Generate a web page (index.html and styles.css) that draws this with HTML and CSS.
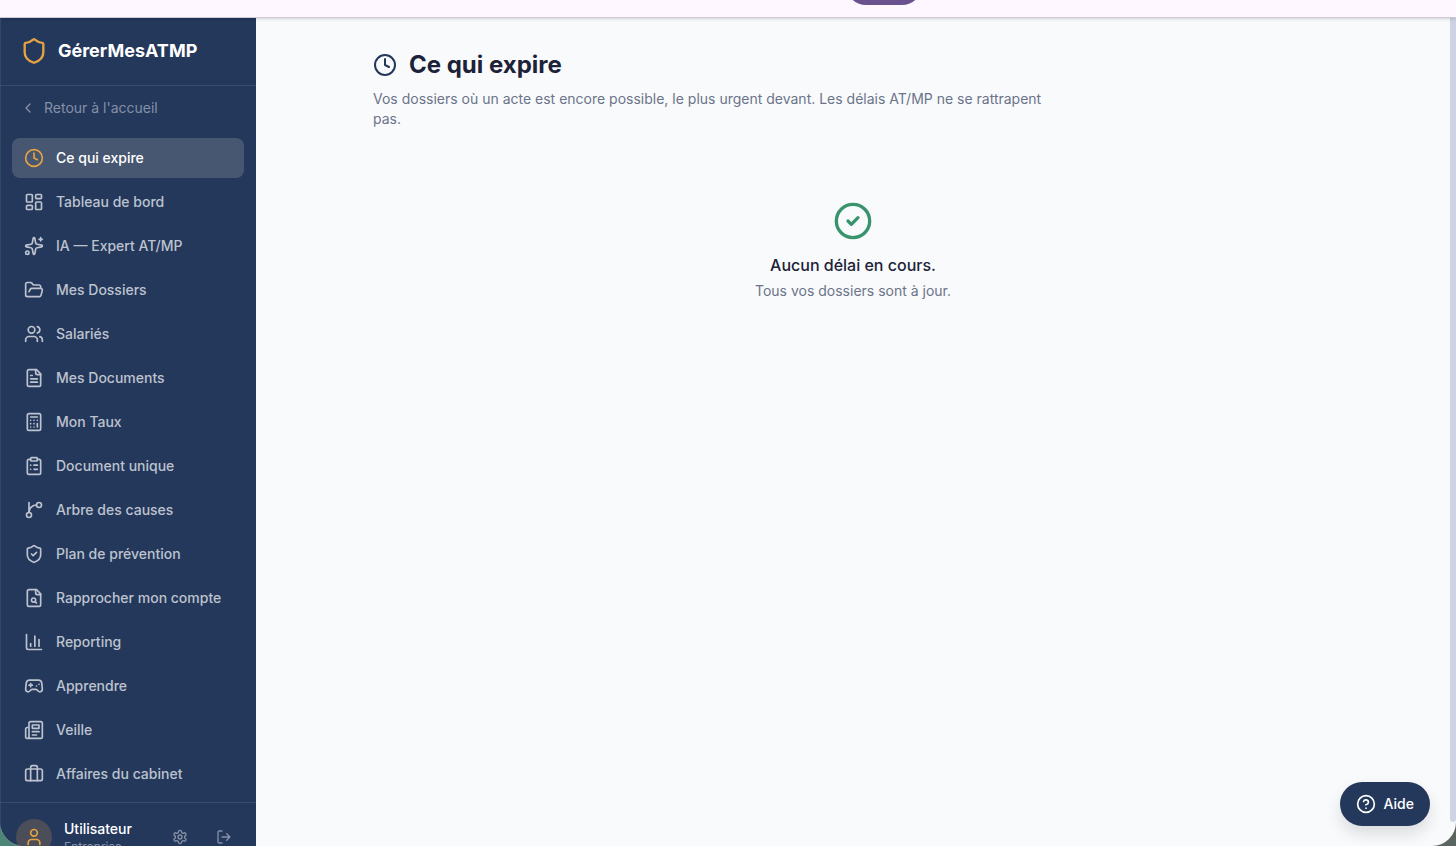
FILE: index.html
```
<!DOCTYPE html>
<html lang="fr">
<head>
    <meta charset="UTF-8">
    <meta name="viewport" content="width=device-width, initial-scale=1">
    <title>Ce qui expire - GérerMesATMP</title>
    <link rel="stylesheet" href="styles.css">
</head>
<body>
<div class="topbar"><span class="pill"></span></div>
<div class="app">
    <!-- menu -->
    <aside class="sidebar">
        <div class="brand">
            <svg class="icon gold" width="28" height="28" viewBox="0 0 24 24"><path d="M20 13c0 5-3.500 7.500-7.660 8.950a1 1 0 0 1-.67-.01C7.500 20.500 4 18 4 13V6a1 1 0 0 1 1-1c2 0 4.500-1.200 6.240-2.720a1.170 1.170 0 0 1 1.520 0C14.510 3.810 17 5 19 5a1 1 0 0 1 1 1z"/></svg>
            <span>GérerMesATMP</span>
        </div>
        <a class="back" href="#">
            <svg class="icon" width="16" height="16" viewBox="0 0 24 24"><path d="m15 18-6-6 6-6"/></svg>
            Retour à l'accueil
        </a>
        <nav class="menu">
            <a class="item current" href="#">
                <svg class="icon gold" width="20" height="20" viewBox="0 0 24 24"><circle cx="12" cy="12" r="10"/><path d="M12 6v6l4 2"/></svg>
                Ce qui expire
            </a>
            <a class="item" href="#">
                <svg class="icon" width="20" height="20" viewBox="0 0 24 24"><rect width="7" height="9" x="3" y="3" rx="1"/><rect width="7" height="5" x="14" y="3" rx="1"/><rect width="7" height="9" x="14" y="12" rx="1"/><rect width="7" height="5" x="3" y="16" rx="1"/></svg>
                Tableau de bord
            </a>
            <a class="item" href="#">
                <svg class="icon" width="20" height="20" viewBox="0 0 24 24"><path d="M11.017 2.814a1 1 0 0 1 1.966 0l1.051 5.558a2 2 0 0 0 1.594 1.594l5.558 1.051a1 1 0 0 1 0 1.966l-5.558 1.051a2 2 0 0 0-1.594 1.594l-1.051 5.558a1 1 0 0 1-1.966 0l-1.051-5.558a2 2 0 0 0-1.594-1.594l-5.558-1.051a1 1 0 0 1 0-1.966l5.558-1.051a2 2 0 0 0 1.594-1.594z"/><path d="M20 2v4M22 4h-4"/><circle cx="4" cy="20" r="2"/></svg>
                IA — Expert AT/MP
            </a>
            <a class="item" href="#">
                <svg class="icon" width="20" height="20" viewBox="0 0 24 24"><path d="m6 14 1.500-2.900A2 2 0 0 1 9.240 10H20a2 2 0 0 1 1.940 2.500l-1.540 6a2 2 0 0 1-1.950 1.500H4a2 2 0 0 1-2-2V5a2 2 0 0 1 2-2h3.900a2 2 0 0 1 1.690.9l.81 1.200a2 2 0 0 0 1.670.9H18a2 2 0 0 1 2 2v2"/></svg>
                Mes Dossiers
            </a>
            <a class="item" href="#">
                <svg class="icon" width="20" height="20" viewBox="0 0 24 24"><path d="M16 21v-2a4 4 0 0 0-4-4H6a4 4 0 0 0-4 4v2"/><circle cx="9" cy="7" r="4"/><path d="M22 21v-2a4 4 0 0 0-3-3.870M16 3.130a4 4 0 0 1 0 7.750"/></svg>
                Salariés
            </a>
            <a class="item" href="#">
                <svg class="icon" width="20" height="20" viewBox="0 0 24 24"><path d="M15 2H6a2 2 0 0 0-2 2v16a2 2 0 0 0 2 2h12a2 2 0 0 0 2-2V7Z"/><path d="M14 2v4a2 2 0 0 0 2 2h4M10 9H8M16 13H8M16 17H8"/></svg>
                Mes Documents
            </a>
            <a class="item" href="#">
                <svg class="icon" width="20" height="20" viewBox="0 0 24 24"><rect width="16" height="20" x="4" y="2" rx="2"/><path d="M8 6h8M16 14v4M16 10h.01M12 10h.01M8 10h.01M12 14h.01M8 14h.01M12 18h.01M8 18h.01"/></svg>
                Mon Taux
            </a>
            <a class="item" href="#">
                <svg class="icon" width="20" height="20" viewBox="0 0 24 24"><rect width="8" height="4" x="8" y="2" rx="1"/><path d="M16 4h2a2 2 0 0 1 2 2v14a2 2 0 0 1-2 2H6a2 2 0 0 1-2-2V6a2 2 0 0 1 2-2h2M12 11h4M12 16h4M8 11h.01M8 16h.01"/></svg>
                Document unique
            </a>
            <a class="item" href="#">
                <svg class="icon" width="20" height="20" viewBox="0 0 24 24"><path d="M6 3v12"/><circle cx="18" cy="6" r="3"/><circle cx="6" cy="18" r="3"/><path d="M15 6a9 9 0 0 0-9 9"/></svg>
                Arbre des causes
            </a>
            <a class="item" href="#">
                <svg class="icon" width="20" height="20" viewBox="0 0 24 24"><path d="M20 13c0 5-3.500 7.500-7.660 8.950a1 1 0 0 1-.67-.01C7.500 20.500 4 18 4 13V6a1 1 0 0 1 1-1c2 0 4.500-1.200 6.240-2.720a1.170 1.170 0 0 1 1.520 0C14.510 3.810 17 5 19 5a1 1 0 0 1 1 1z"/><path d="m9 12 2 2 4-4"/></svg>
                Plan de prévention
            </a>
            <a class="item" href="#">
                <svg class="icon" width="20" height="20" viewBox="0 0 24 24"><path d="M15 2H6a2 2 0 0 0-2 2v16a2 2 0 0 0 2 2h12a2 2 0 0 0 2-2V7Z"/><path d="M14 2v4a2 2 0 0 0 2 2h4"/><circle cx="11.500" cy="14.500" r="2.500"/><path d="M13.300 16.300 15 18"/></svg>
                Rapprocher mon compte
            </a>
            <a class="item" href="#">
                <svg class="icon" width="20" height="20" viewBox="0 0 24 24"><path d="M3 3v16a2 2 0 0 0 2 2h16M18 17V9M13 17V5M8 17v-3"/></svg>
                Reporting
            </a>
            <a class="item" href="#">
                <svg class="icon" width="20" height="20" viewBox="0 0 24 24"><path d="M6 11h4M8 9v4M15 12h.01M18 10h.01"/><path d="M17.320 5H6.680a4 4 0 0 0-3.978 3.590C2.604 9.416 2 14.456 2 16a3 3 0 0 0 3 3c1 0 1.500-.5 2-1l1.414-1.414A2 2 0 0 1 9.828 16h4.344a2 2 0 0 1 1.414.586L17 18c.5.5 1 1 2 1a3 3 0 0 0 3-3c0-1.545-.604-6.584-.702-7.410A4 4 0 0 0 17.320 5z"/></svg>
                Apprendre
            </a>
            <a class="item" href="#">
                <svg class="icon" width="20" height="20" viewBox="0 0 24 24"><path d="M4 22h16a2 2 0 0 0 2-2V4a2 2 0 0 0-2-2H8a2 2 0 0 0-2 2v16a2 2 0 0 1-2 2Zm0 0a2 2 0 0 1-2-2v-9c0-1.100.9-2 2-2h2M18 14h-8M15 18h-5M10 6h8v4h-8V6Z"/></svg>
                Veille
            </a>
            <a class="item" href="#">
                <svg class="icon" width="20" height="20" viewBox="0 0 24 24"><path d="M16 20V4a2 2 0 0 0-2-2h-4a2 2 0 0 0-2 2v16"/><rect width="20" height="14" x="2" y="6" rx="2"/></svg>
                Affaires du cabinet
            </a>
        </nav>
        <!-- compte -->
        <div class="user">
            <span class="avatar">
                <svg class="icon gold" width="20" height="20" viewBox="0 0 24 24"><path d="M19 21v-2a4 4 0 0 0-4-4H9a4 4 0 0 0-4 4v2"/><circle cx="12" cy="7" r="4"/></svg>
            </span>
            <div class="who">
                <p class="name">Utilisateur</p>
                <p class="role">Entreprise</p>
            </div>
            <button class="tool" type="button" aria-label="Paramètres">
                <svg class="icon" width="16" height="16" viewBox="0 0 24 24"><path d="M12.220 2h-.44a2 2 0 0 0-2 2v.18a2 2 0 0 1-1 1.730l-.43.25a2 2 0 0 1-2 0l-.15-.08a2 2 0 0 0-2.730.73l-.22.38a2 2 0 0 0 .73 2.730l.15.1a2 2 0 0 1 1 1.720v.51a2 2 0 0 1-1 1.740l-.15.09a2 2 0 0 0-.73 2.730l.22.38a2 2 0 0 0 2.730.73l.15-.08a2 2 0 0 1 2 0l.43.25a2 2 0 0 1 1 1.730V20a2 2 0 0 0 2 2h.44a2 2 0 0 0 2-2v-.18a2 2 0 0 1 1-1.730l.43-.25a2 2 0 0 1 2 0l.15.08a2 2 0 0 0 2.730-.73l.22-.39a2 2 0 0 0-.73-2.730l-.15-.08a2 2 0 0 1-1-1.740v-.5a2 2 0 0 1 1-1.740l.15-.09a2 2 0 0 0 .73-2.730l-.22-.38a2 2 0 0 0-2.730-.73l-.15.08a2 2 0 0 1-2 0l-.43-.25a2 2 0 0 1-1-1.730V4a2 2 0 0 0-2-2z"/><circle cx="12" cy="12" r="3"/></svg>
            </button>
            <button class="tool" type="button" aria-label="Se déconnecter">
                <svg class="icon" width="16" height="16" viewBox="0 0 24 24"><path d="m16 17 5-5-5-5M21 12H9M9 21H5a2 2 0 0 1-2-2V5a2 2 0 0 1 2-2h4"/></svg>
            </button>
        </div>
    </aside>
    <main class="main">
        <div class="content">
            <h1 class="title">
                <svg class="icon navy" width="24" height="24" viewBox="0 0 24 24"><circle cx="12" cy="12" r="10"/><path d="M12 6v6l4 2"/></svg>
                Ce qui expire
            </h1>
            <p class="intro">Vos dossiers où un acte est encore possible, le plus urgent devant. Les délais AT/MP ne se rattrapent pas.</p>
            <div class="empty">
                <svg class="icon green" width="40" height="40" viewBox="0 0 24 24"><circle cx="12" cy="12" r="10"/><path d="m9 12 2 2 4-4"/></svg>
                <p class="empty-title">Aucun délai en cours.</p>
                <p class="empty-text">Tous vos dossiers sont à jour.</p>
            </div>
        </div>
    </main>
    <div class="scroll"><div class="thumb"></div></div>
    <button class="help" type="button">
        <svg class="icon" width="20" height="20" viewBox="0 0 24 24"><circle cx="12" cy="12" r="10"/><path d="M9.090 9a3 3 0 0 1 5.830 1c0 2-3 3-3 3M12 17h.01"/></svg>
        Aide
    </button>
</div>
</body>
</html>
```
FILE: styles.css
```
* {
    box-sizing: border-box;
    margin: 0;
    padding: 0;
}
body {
    display: flex;
    flex-direction: column;
    height: 100vh;
    overflow: hidden;
    background: linear-gradient(to right, #4d8577, #5b655f);
    font: 14px/20px Inter, "Liberation Sans", sans-serif;
    color: #1c2237;
}
a {
    color: inherit;
    text-decoration: none;
}
button {
    border: 0;
    background: none;
    font: inherit;
    cursor: pointer;
}
.icon {
    flex: none;
    fill: none;
    stroke: currentColor;
    stroke-width: 2;
    stroke-linecap: round;
    stroke-linejoin: round;
}
.gold {
    color: #e5a243;
}
.navy {
    color: #24385c;
}
.green {
    color: #38946c;
}

/* bandeau du haut */
.topbar {
    position: relative;
    z-index: 1;
    display: flex;
    flex: none;
    justify-content: flex-end;
    align-items: flex-end;
    height: 17px;
    padding: 0 534px 12px 0;
    background: #fef7ff;
    box-shadow: 0 1px #cfcad3, 0 1px 4px rgba(0, 0, 0, .25);
}
.pill {
    width: 76px;
    height: 40px;
    border-radius: 20px;
    background: #6a528f;
}

.app {
    position: relative;
    display: flex;
    flex: 1;
    min-height: 0;
    overflow: hidden;
    border-radius: 0 0 24px 24px;
    background: #f9fafc;
}

/* menu */
.sidebar {
    display: flex;
    flex: none;
    flex-direction: column;
    width: 256px;
    background: #24385c;
    color: #bdc3ce;
    box-shadow: inset 1px 0 #35486a;
}
.brand {
    display: flex;
    flex: none;
    align-items: center;
    gap: 10px;
    height: 69px;
    padding: 0 20px;
    border-bottom: 1px solid #3a4c6d;
    font-size: 18px;
    line-height: 28px;
    font-weight: 700;
    color: #fff;
}
.back {
    display: flex;
    flex: none;
    align-items: center;
    gap: 8px;
    padding: 12px 20px;
    color: #8590a6;
}
.menu {
    display: flex;
    flex: none;
    flex-direction: column;
    gap: 4px;
    padding: 8px 12px;
}
.item {
    display: flex;
    align-items: center;
    gap: 12px;
    height: 40px;
    padding: 0 12px;
    border-radius: 8px;
    font-weight: 500;
}
.item.current {
    background: #475771;
    color: #fff;
}
.user {
    display: flex;
    flex: none;
    align-items: center;
    gap: 12px;
    padding: 16px;
    border-top: 1px solid #3a4c6d;
}
.avatar {
    display: flex;
    align-items: center;
    justify-content: center;
    width: 36px;
    height: 36px;
    border-radius: 50%;
    background: #4b4d58;
}
.who {
    flex: 1;
}
.name {
    font-weight: 500;
    color: #fff;
}
.role {
    font-size: 12px;
    line-height: 16px;
    color: #8590a6;
}
.tool {
    display: flex;
    align-items: center;
    justify-content: center;
    width: 32px;
    height: 32px;
    color: #8590a6;
}

/* contenu */
.main {
    flex: 1;
    min-width: 0;
}
.content {
    max-width: 1024px;
    margin: 0 auto;
    padding: 32px;
}
.title {
    display: flex;
    align-items: center;
    gap: 12px;
    font-size: 24px;
    line-height: 32px;
    font-weight: 700;
}
.intro {
    max-width: 672px;
    margin-top: 8px;
    color: #6b7489;
}
.empty {
    display: flex;
    flex-direction: column;
    align-items: center;
    padding: 72px 0;
    text-align: center;
}
.empty-title {
    margin-top: 12px;
    font-size: 16px;
    line-height: 24px;
    font-weight: 500;
}
.empty-text {
    margin-top: 4px;
    color: #6b7489;
}
.scroll {
    flex: none;
    width: 6px;
    padding-bottom: 24px;
}
.thumb {
    height: 100%;
    border-radius: 0 0 3px 3px;
    background: #cdd3e1;
}
.help {
    position: absolute;
    right: 26px;
    bottom: 20px;
    display: flex;
    align-items: center;
    gap: 8px;
    height: 44px;
    padding: 0 16px;
    border-radius: 22px;
    background: #24385c;
    color: #fff;
    font-weight: 500;
    box-shadow: 0 8px 16px rgba(0, 0, 0, .12);
}
```
